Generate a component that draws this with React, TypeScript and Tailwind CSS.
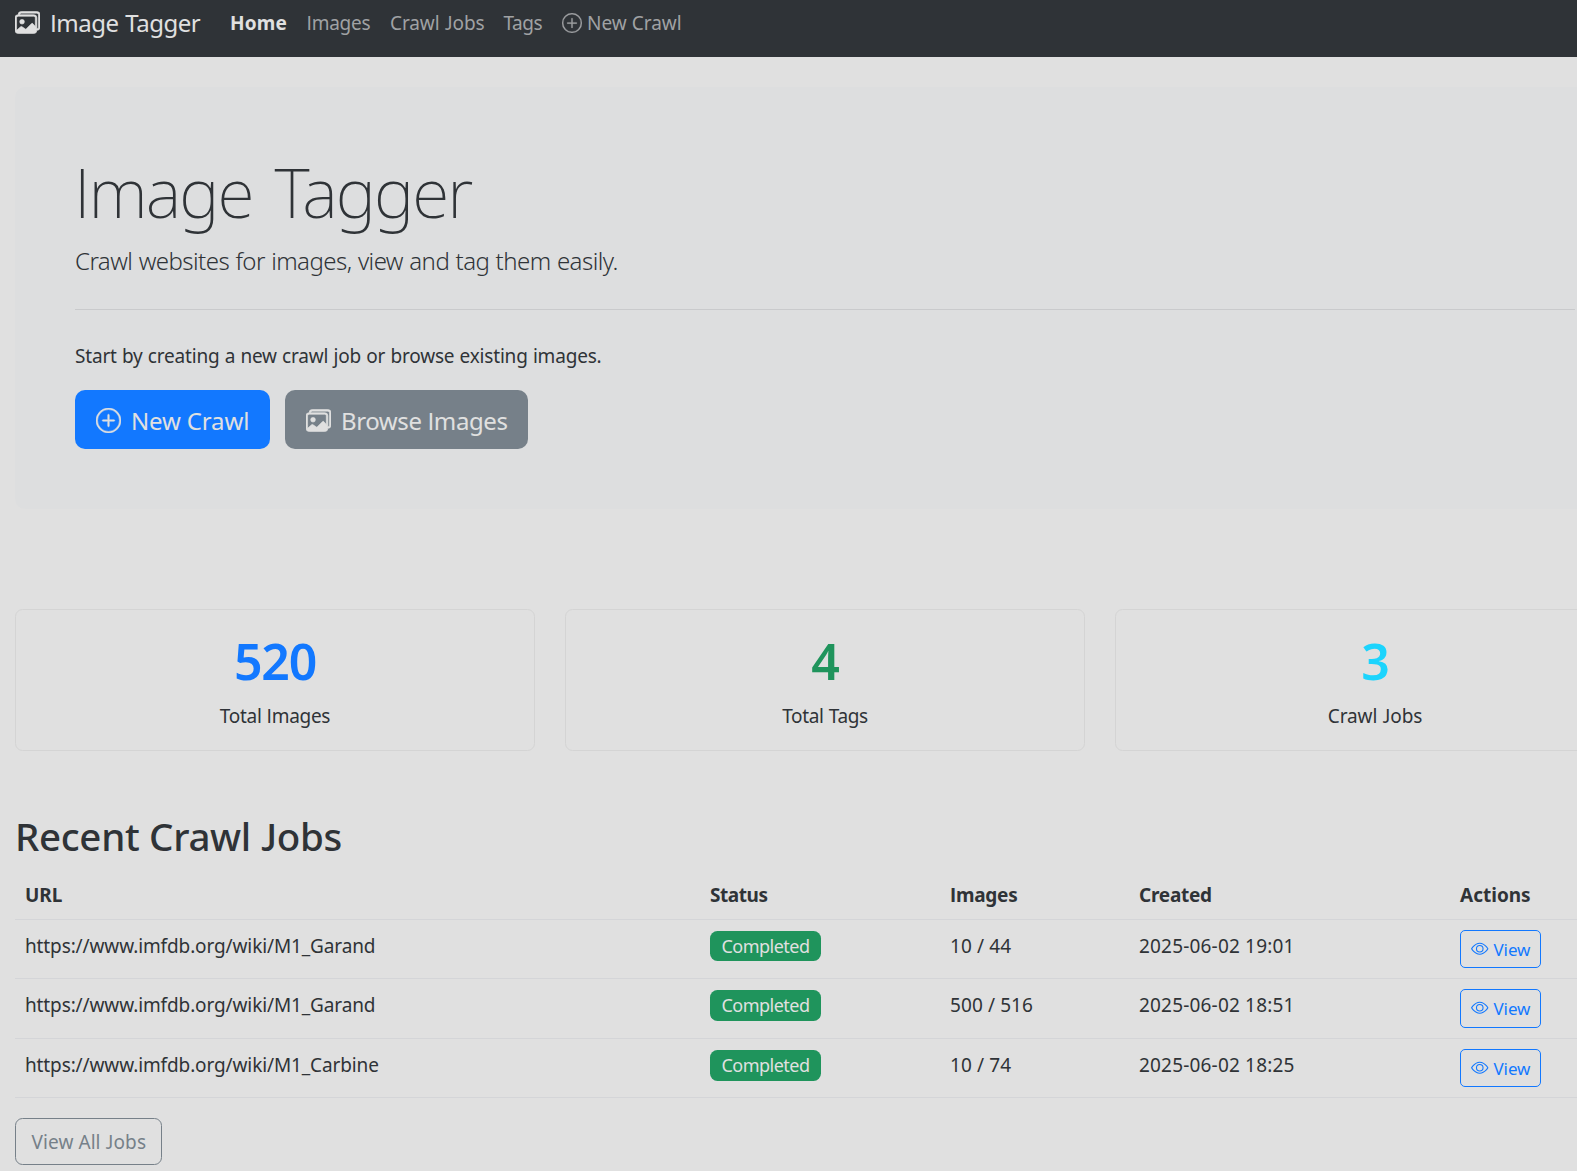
import React from "react";
import { BsEye, BsImages, BsPlusCircle } from "react-icons/bs";

const stats = [
  { value: "520", label: "Total Images", color: "text-[#1278ff]", tracking: "tracking-[-0.3px]" },
  { value: "4", label: "Total Tags", color: "text-[#1f945c]", tracking: "tracking-[-0.35px]" },
  { value: "3", label: "Crawl Jobs", color: "text-[#1cd4fd]", tracking: "tracking-[-0.1px]" },
];

const jobs = [
  { url: "https://www.imfdb.org/wiki/M1_Garand", images: "10 / 44", created: "2025-06-02 19:01", height: "h-[59px]", badge: "h-[30px]", view: "h-[38px]" },
  { url: "https://www.imfdb.org/wiki/M1_Garand", images: "500 / 516", created: "2025-06-02 18:51", height: "h-[60px]", badge: "h-[31px]", view: "h-[39px]" },
  { url: "https://www.imfdb.org/wiki/M1_Carbine", images: "10 / 74", created: "2025-06-02 18:25", height: "h-[59px]", badge: "h-[31px]", view: "h-[38px]" },
];

function Navbar() {
  return (
    <nav className="flex h-[57px] items-start bg-[#2f3337] pl-[15px] whitespace-nowrap text-[#a0a2a4]">
      <a className="flex w-[215px] pt-1 text-[24px] leading-[37px] tracking-[-0.5px] text-[#e0e0e0] [word-spacing:1px]">
        <BsImages className="mt-[6px] mr-[10px] size-[25px] [stroke-width:0.4]" />
        Image Tagger
      </a>
      <div className="flex pt-2 leading-[30px]">
        <a className="w-[76.5px] font-bold tracking-[0.2px] text-[#e0e0e0]">Home</a>
        <a className="w-[83.5px] tracking-[-0.25px]">Images</a>
        <a className="w-[113.5px] tracking-[-0.1px] [word-spacing:0.5px]">Crawl Jobs</a>
        <a className="w-[58.5px] tracking-[-0.5px]">Tags</a>
        <a className="flex">
          <BsPlusCircle className="mt-[5px] mr-[5px] size-[20px] [stroke-width:0.2]" />
          New Crawl
        </a>
      </div>
    </nav>
  );
}

function Hero() {
  return (
    <section className="mt-[30px] h-[421.5px] rounded-[10px] bg-[#dddedf] p-[60px] whitespace-nowrap">
      <h1 className="-ml-px h-[84px] text-[68px] leading-[89px] font-extralight tracking-[-1.9px] [word-spacing:6px]">
        Image Tagger
      </h1>
      <p className="mt-[10px] h-[37.5px] text-[24px] leading-[39px] font-light tracking-[-0.54px] [word-spacing:0.6px]">
        Crawl websites for images, view and tag them easily.
      </p>
      <hr className="mt-[30.5px] border-t border-[#c9cacc]" />
      <p className="mt-[31px] leading-[30px] tracking-[-0.19px] [word-spacing:0.5px]">
        Start by creating a new crawl job or browse existing images.
      </p>
      <div className="mt-[19px] flex gap-[15px] text-[24px] leading-[33px] text-[#e0e0e0]">
        <a className="flex h-[59px] w-[195px] items-center rounded-[10px] bg-[#1278ff] pt-[2px] pl-[21px] tracking-[-0.15px]">
          <BsPlusCircle className="mr-[10px] size-[25px] [stroke-width:0.3]" />
          New Crawl
        </a>
        <a className="flex h-[59px] w-[243px] items-center rounded-[10px] bg-[#768089] pt-[2px] pl-[21px] tracking-[-0.4px]">
          <BsImages className="mr-[10px] size-[25px] [stroke-width:0.4]" />
          Browse Images
        </a>
      </div>
    </section>
  );
}

function Stats() {
  return (
    <section className="mt-[100.5px] grid grid-cols-3 gap-[30px] text-center">
      {stats.map((s) => (
        <div key={s.label} className="h-[142px] rounded-[7.5px] border border-[#d4d4d4] pt-[21px]">
          <div className={`text-[50px] leading-[60px] font-semibold tracking-[-1.3px] ${s.color}`}>{s.value}</div>
          <div className={`mt-[10px] leading-[30px] [word-spacing:0.5px] ${s.tracking}`}>{s.label}</div>
        </div>
      ))}
    </section>
  );
}

function RecentJobs() {
  const columns = "grid grid-cols-[685px_240px_189px_321px_1fr] items-start border-b border-[#d4d5d8] pl-[10px] leading-[30px]";
  return (
    <section className="mt-[61px] whitespace-nowrap">
      <h2 className="text-[38.5px] leading-[48px] font-medium tracking-[-0.32px]">Recent Crawl Jobs</h2>
      <div className={`${columns} mt-[10px] h-[50px] pt-[10px] font-bold`}>
        <span>URL</span>
        <span className="tracking-[-0.45px]">Status</span>
        <span className="tracking-[-0.25px]">Images</span>
        <span className="tracking-[-0.25px]">Created</span>
        <span>Actions</span>
      </div>
      {jobs.map((j) => (
        <div key={j.created} className={`${columns} ${j.height}`}>
          <span className="pt-[11px] tracking-[-0.12px]">{j.url}</span>
          <span className={`mt-[11px] w-[111px] rounded-[7.5px] bg-[#1f945c] pt-[3px] text-center text-[18px] leading-[24px] tracking-[-0.5px] text-[#e0e0e0] ${j.badge}`}>
            Completed
          </span>
          <span className="pt-[11px] tracking-[0.1px]">{j.images}</span>
          <span className="pt-[11px] tracking-[0.18px]">{j.created}</span>
          <a className={`mt-[10px] flex w-[81px] rounded-[5px] border border-[#1278ff] pt-[7px] pl-[10px] text-[17px] leading-[23px] tracking-[-0.1px] text-[#1278ff] ${j.view}`}>
            <BsEye className="mt-[2px] mr-[5px] size-[17.5px]" />
            View
          </a>
        </div>
      ))}
      <a className="mt-[20px] flex h-[47px] w-[147px] rounded-[7.5px] border border-[#768089] pt-[8px] pl-[15.5px] leading-[30px] tracking-[0.08px] text-[#768089]">
        View All Jobs
      </a>
    </section>
  );
}

export default function App() {
  return (
    <div className="h-[1171px] w-full overflow-hidden bg-[#e0e0e0] font-['Noto_Sans','Open_Sans',sans-serif] text-[19px] text-[#2f3337] [font-feature-settings:'salt']">
      <Navbar />
      <main className="ml-[15px] w-[1620px]">
        <Hero />
        <Stats />
        <RecentJobs />
      </main>
    </div>
  );
}
